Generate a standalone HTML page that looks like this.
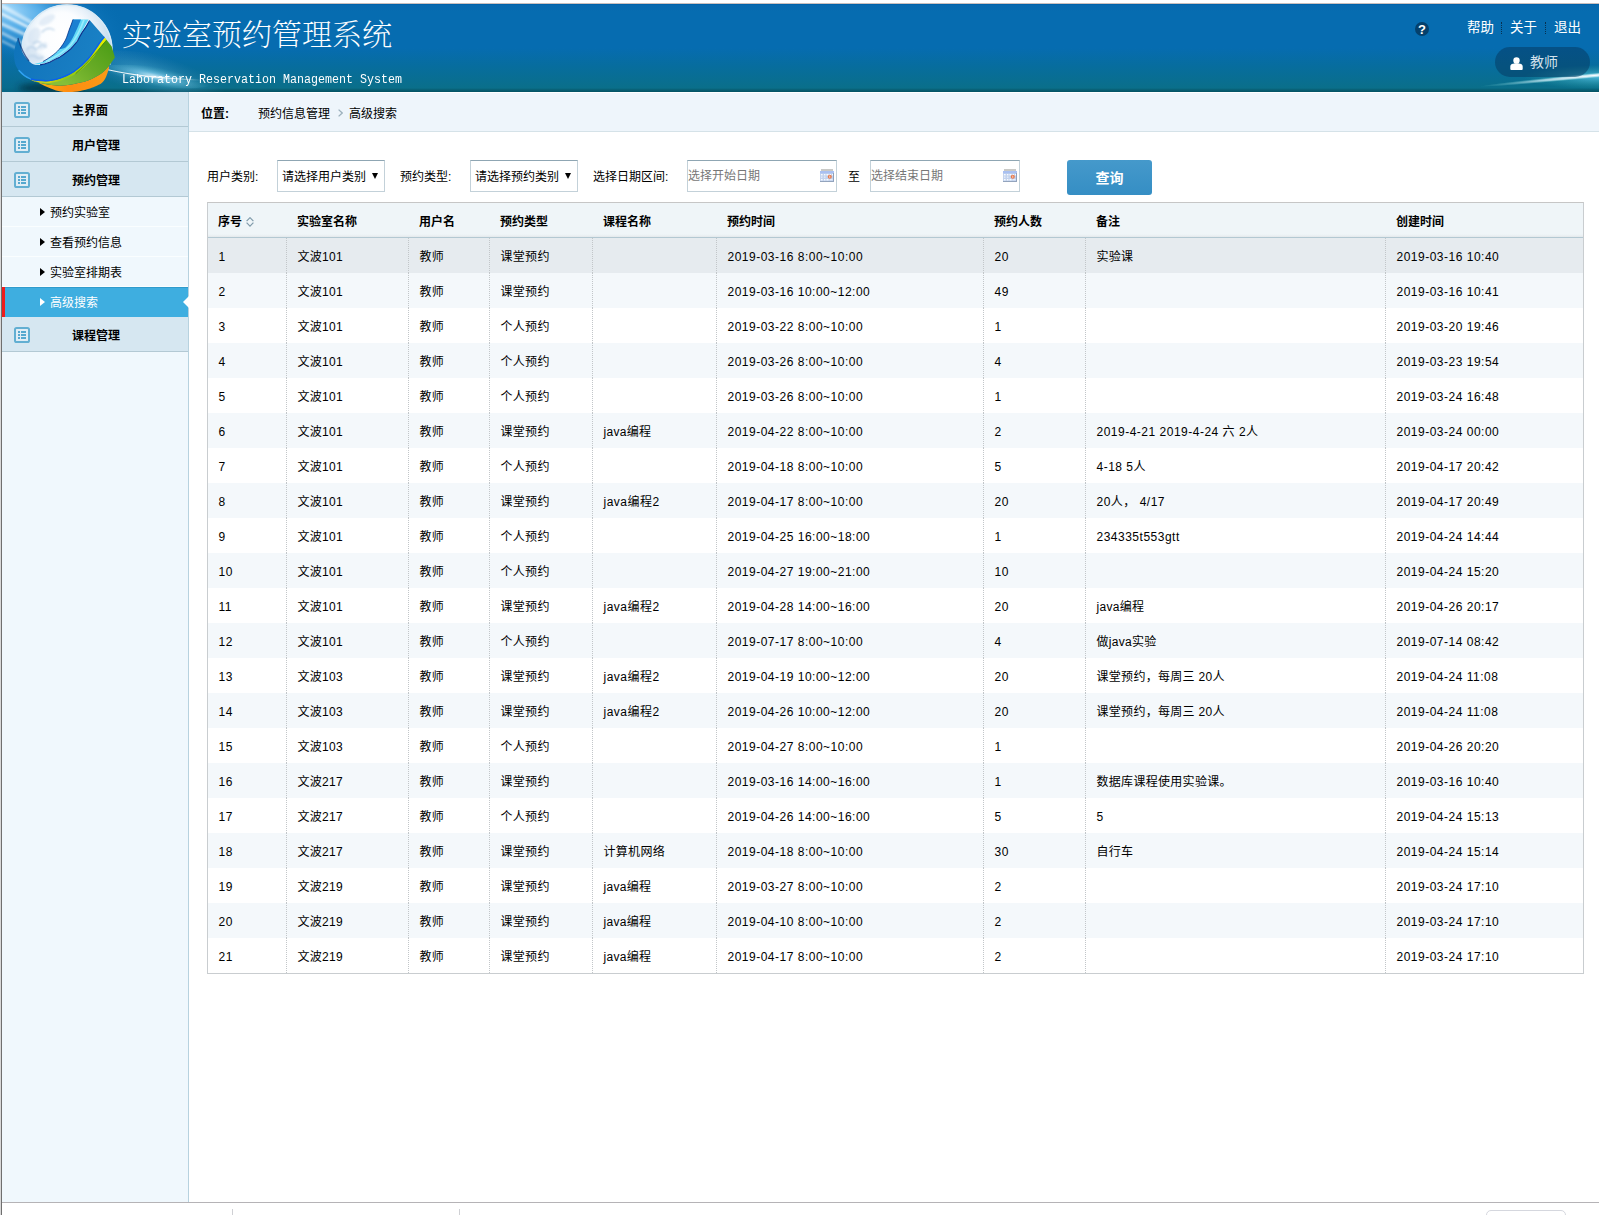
<!DOCTYPE html>
<html lang="zh-CN">
<head>
<meta charset="utf-8">
<title>实验室预约管理系统</title>
<style>
*{box-sizing:border-box;margin:0;padding:0}
html,body{width:1599px;height:1215px;overflow:hidden;background:#fff}
body{position:relative;font-family:"Liberation Sans","Noto Sans CJK SC",sans-serif;font-size:12px;color:#000}
.abs{position:absolute}
#edgeL0{left:0;top:0;width:1px;height:1215px;background:#d8d8d8}
#edgeL1{left:1px;top:0;width:1px;height:1215px;background:#6f6f6f}
#edgeT{left:2px;top:3px;width:1597px;height:1px;background:#c9bfbd}
/* header */
#hdr{left:2px;top:4px;width:1597px;height:88px;overflow:hidden;
 background:linear-gradient(to bottom,#0062aa 0,#0062aa 1px,#0869ae 1.2px,#066cb0 8px,#066cb0 44px,#076d9e 62px,#0a6f8a 84px,#075e72 86px,#045263 88px)}
#title{left:120px;top:11px;font-family:"Liberation Serif","Noto Serif CJK SC",serif;font-size:30px;line-height:40px;color:#fff;white-space:nowrap;letter-spacing:0;font-weight:200}
#sub{left:119.8px;top:67.4px;font-family:"Liberation Mono",monospace;font-size:12px;line-height:18px;color:#fff;white-space:nowrap;transform:scaleX(.972);transform-origin:0 0}
.tl{color:#fff;font-size:13.5px;line-height:18px;white-space:nowrap}
#user{left:1493px;top:43px;width:95px;height:30px;border-radius:15px;background:rgba(6,60,100,.55)}
#user span{position:absolute;left:35px;top:5px;font-size:14px;line-height:20px;color:#d3e2ec}
/* sidebar */
#side{left:2px;top:92px;width:187px;height:1110px;background:#f0f8fd;border-right:1px solid #b7d2df}
.m1{position:absolute;left:0;width:186px;height:35px;background:#d6e7f1;border-bottom:1px solid #b3c9d4;font-weight:bold;font-size:12px;line-height:38px;padding-left:70px}
.m1 svg{position:absolute;left:12px;top:10px}
.m2{position:absolute;left:0;width:186px;height:30px;line-height:33px;padding-left:48px;font-size:12px}
.m2:before{content:"";position:absolute;left:38px;top:11px;border-left:5px solid #000;border-top:4px solid transparent;border-bottom:4px solid transparent}
.m2{border-bottom:1px solid #fafeff}
.m2.on{background:#3eaee0;color:#fff;border-left:3px solid #ee1c1c;padding-left:45px;box-shadow:inset 0 1px 0 #2f9bcc;border-bottom:0;overflow:visible}
.m2.on:before{left:35px;border-left-color:#fff}
.m2.on:after{content:"";position:absolute;right:-1px;top:8.5px;border-right:6.5px solid #fff;border-top:6px solid transparent;border-bottom:6px solid transparent}
/* main */
#crumb{left:189px;top:93px;width:1410px;height:39px;background:#eef5fb;border-bottom:1px solid #d5e2e8;line-height:42px}
#crumb span{position:absolute;top:0;white-space:nowrap}
.lbl{position:absolute;top:160px;line-height:35px;white-space:nowrap}
.sel{position:absolute;top:160px;width:108px;height:32px;border:1px solid #c3d1d9;border-top-color:#8fa6b3;background:#fff;line-height:33px;padding-left:4px;white-space:nowrap}
.sel:after{content:"";position:absolute;right:6px;top:12px;border-top:6px solid #000;border-left:3.5px solid transparent;border-right:3.5px solid transparent}
.dt{position:absolute;top:160px;width:150px;height:32px;border:1px solid #c3d1d9;border-top-color:#8fa6b3;background:#fff;line-height:31px;padding-left:0;color:#777;white-space:nowrap}
.dt svg{position:absolute;left:132px;top:8px}
#btn{left:1067px;top:160px;width:85px;height:35px;border-radius:3px;background:linear-gradient(#4599cb,#358ec4);color:#fff;font-weight:bold;font-size:14px;line-height:37px;text-align:center}
/* table */
#tbl{left:207px;top:202px;width:1377px;border:1px solid #c9cdd0;border-top-color:#c6c6c6}
table{border-collapse:separate;border-spacing:0;table-layout:fixed;width:1375px;font-size:12px}
th{height:35px;background:linear-gradient(#eff5f8 0,#eff5f8 31px,#e9eef1 33px,#e2e7ea 34px);border-bottom:1px solid #b3c8d2;text-align:left;padding:0 0 0 10px;font-weight:bold;white-space:nowrap}
td{height:35px;vertical-align:top;line-height:30px;padding:3.5px 0 0 10.5px;border-right:1px dotted #c2c6c9;white-space:nowrap;letter-spacing:.3px;color:#000}
td:last-child{border-right:0}
td.n{letter-spacing:.5px}
tr.e td{background:#f4f8fb}
tr.h td{background:#e6ebef}
#foot{left:2px;top:1202px;width:1597px;height:1px;background:#b5b3b6}
.tick{position:absolute;top:1209px;width:1px;height:6px;background:#cfd0d4}
#fbox{left:1486px;top:1210px;width:80px;height:20px;border:1px solid #d5d7de;border-radius:5px}
</style>
</head>
<body>
<div class="abs" id="edgeL0"></div><div class="abs" id="edgeL1"></div><div class="abs" id="edgeT"></div>

<div class="abs" id="hdr">
<svg class="abs" style="left:0;top:0" width="1597" height="88" viewBox="2 4 1597 88">
<defs>
<radialGradient id="gl" cx="6" cy="8" r="130" gradientUnits="userSpaceOnUse" gradientTransform="translate(6 8) rotate(18) scale(1 .42) translate(-6 -8)"><stop offset="0" stop-color="#a6dafb" stop-opacity="1"/><stop offset=".3" stop-color="#5db4ee" stop-opacity=".9"/><stop offset=".65" stop-color="#2189d2" stop-opacity=".5"/><stop offset="1" stop-color="#0a6fb2" stop-opacity="0"/></radialGradient>
<linearGradient id="lt2" x1="0" y1="40" x2="0" y2="92" gradientUnits="userSpaceOnUse"><stop offset="0" stop-color="#0d74b2" stop-opacity="0"/><stop offset=".45" stop-color="#0b6fa6" stop-opacity=".55"/><stop offset="1" stop-color="#07698a" stop-opacity=".85"/></linearGradient>
<linearGradient id="lt" x1="0" y1="50" x2="0" y2="92" gradientUnits="userSpaceOnUse"><stop offset="0" stop-color="#07698a" stop-opacity="0"/><stop offset="1" stop-color="#07698a" stop-opacity=".9"/></linearGradient>
<radialGradient id="sp" cx="62" cy="36" r="52" gradientUnits="userSpaceOnUse"><stop offset="0" stop-color="#ffffff"/><stop offset=".45" stop-color="#fbfdff"/><stop offset=".75" stop-color="#dbe9f5"/><stop offset=".93" stop-color="#c3dcef"/><stop offset="1" stop-color="#a5d2f0"/></radialGradient>
<linearGradient id="gr" x1="108" y1="45" x2="70" y2="88" gradientUnits="userSpaceOnUse"><stop offset="0" stop-color="#4f9f18"/><stop offset=".5" stop-color="#68ab26"/><stop offset="1" stop-color="#86bf38"/></linearGradient>
<linearGradient id="ye" x1="104" y1="38" x2="40" y2="83" gradientUnits="userSpaceOnUse"><stop offset="0" stop-color="#e8f000"/><stop offset=".35" stop-color="#b0d400"/><stop offset=".7" stop-color="#8fc818"/><stop offset="1" stop-color="#f0d810"/></linearGradient>
<linearGradient id="or" x1="35" y1="80" x2="108" y2="80" gradientUnits="userSpaceOnUse"><stop offset="0" stop-color="#fbb414"/><stop offset=".45" stop-color="#ff8c10"/><stop offset="1" stop-color="#f99a18"/></linearGradient>
<linearGradient id="bb" x1="20" y1="40" x2="100" y2="70" gradientUnits="userSpaceOnUse"><stop offset="0" stop-color="#0f74bb"/><stop offset=".5" stop-color="#167ac0"/><stop offset="1" stop-color="#1a82c6"/></linearGradient>
<radialGradient id="st1" cx="155" cy="76.5" r="60" gradientUnits="userSpaceOnUse" gradientTransform="translate(155 76.5) rotate(6) scale(1 .16) translate(-155 -76.5)"><stop offset="0" stop-color="#e8f8ff" stop-opacity=".85"/><stop offset=".35" stop-color="#8fd8f5" stop-opacity=".5"/><stop offset="1" stop-color="#4ab" stop-opacity="0"/></radialGradient>
<linearGradient id="ln" x1="109" y1="0" x2="203" y2="0" gradientUnits="userSpaceOnUse"><stop offset="0" stop-color="#fff" stop-opacity=".9"/><stop offset=".6" stop-color="#fff" stop-opacity=".85"/><stop offset="1" stop-color="#fff" stop-opacity="0"/></linearGradient>
<radialGradient id="st2" cx="150" cy="74" r="80" gradientUnits="userSpaceOnUse" gradientTransform="translate(150 74) rotate(8) scale(1 .26) translate(-150 -74)"><stop offset="0" stop-color="#6cc4ea" stop-opacity=".5"/><stop offset="1" stop-color="#48b" stop-opacity="0"/></radialGradient>
<radialGradient id="st3" cx="1599" cy="75" r="120" gradientUnits="userSpaceOnUse" gradientTransform="translate(1599 75) scale(1 .022) translate(-1599 -75)"><stop offset="0" stop-color="#fff" stop-opacity="1"/><stop offset=".5" stop-color="#d5f2fb" stop-opacity=".7"/><stop offset="1" stop-color="#6cc" stop-opacity="0"/></radialGradient>
<radialGradient id="st4" cx="1599" cy="77" r="75" gradientUnits="userSpaceOnUse" gradientTransform="translate(1599 77) scale(1 .16) translate(-1599 -77)"><stop offset="0" stop-color="#5cc6ea" stop-opacity=".8"/><stop offset="1" stop-color="#3aa" stop-opacity="0"/></radialGradient>
<clipPath id="cs"><rect x="10" y="0" width="110" height="65"/></clipPath>
<filter id="bl" x="-20%" y="-20%" width="140%" height="140%"><feGaussianBlur stdDeviation="1.2"/></filter>
<filter id="bl2" x="-20%" y="-50%" width="140%" height="200%"><feGaussianBlur stdDeviation="3"/></filter>
</defs>
<rect x="2" y="4" width="190" height="88" fill="url(#gl)"/>
<rect x="2" y="40" width="60" height="52" fill="url(#lt2)"/>
<g stroke="#fff" stroke-linecap="round" fill="none" filter="url(#bl)">
<path d="M2 6 L34 24" stroke-opacity=".5" stroke-width="4"/>
<path d="M2 14 L30 28" stroke-opacity=".75" stroke-width="3"/>
<path d="M2 24 L26 35" stroke-opacity=".6" stroke-width="3.5"/>
<path d="M2 33 L22 43" stroke-opacity=".5" stroke-width="3"/>
<path d="M2 41 L18 49" stroke-opacity=".45" stroke-width="2"/>
</g>
<ellipse cx="52" cy="88" rx="34" ry="5" fill="#02303f" fill-opacity=".85" filter="url(#bl2)"/>
<ellipse cx="150" cy="74" rx="80" ry="21" fill="url(#st2)" transform="rotate(8 150 74)"/>
<ellipse cx="155" cy="76.5" rx="60" ry="10" fill="url(#st1)" transform="rotate(6 155 76.5)"/>
<path d="M108 69.8 Q140 77.6 203 80.3" fill="none" stroke="url(#ln)" stroke-width="1.1"/>
<g clip-path="url(#cs)"><circle cx="67" cy="50" r="45.5" fill="url(#sp)"/>
<circle cx="67" cy="50" r="45" fill="none" stroke="#d8eaf6" stroke-width="1.4" stroke-opacity=".95"/>
<g fill="#cfe0f0" fill-opacity=".55" filter="url(#bl)"><ellipse cx="31" cy="52" rx="6" ry="7"/><ellipse cx="37" cy="58" rx="7" ry="4"/><ellipse cx="34" cy="36" rx="6" ry="9" transform="rotate(25 34 36)"/><ellipse cx="47" cy="20" rx="9" ry="4" transform="rotate(-30 47 20)"/><ellipse cx="43" cy="46" rx="5" ry="3" transform="rotate(-35 43 46)"/></g>
<g stroke="#b4cee6" stroke-width="1.2" fill="none" stroke-linecap="round" filter="url(#bl)">
<path d="M27 50 q3-5 7-2 q2 3 5-1 q3-4 7 0"/><path d="M28 57 q4-3 8 0 q3 3 7 0"/><path d="M33 44 q4-4 8-1"/><path d="M42 32 q6-6 12-2"/>
</g></g>
<path d="M30 79 C30.7 79.4 31.5 80.5 34.0 81.3 C36.5 82.1 41.2 83.3 45.0 84.0 C48.8 84.7 53.5 85.4 57.0 85.6 C60.5 85.8 63.2 85.6 66.0 85.3 C68.8 85.0 70.3 84.8 74.0 84.0 C77.7 83.2 83.3 82.4 88.0 80.6 C92.7 78.8 98.5 75.4 102.0 73.0 C105.5 70.6 107.8 67.2 109.0 66.0 L109 68 C108.5 69.5 107.2 74.5 106.0 77.0 C104.8 79.5 103.8 81.1 102.0 82.7 C100.2 84.3 97.3 85.5 95.0 86.5 C92.7 87.5 90.9 88.2 88.0 89.0 C85.1 89.8 81.2 91.0 77.5 91.5 C73.8 92.0 69.6 92.2 66.0 92.0 C62.4 91.8 59.3 91.3 56.0 90.4 C52.7 89.5 49.0 87.8 46.0 86.5 C43.0 85.2 40.7 83.8 38.0 82.5 C35.3 81.2 31.3 79.6 30.0 79.0Z" fill="url(#or)"/>
<path d="M104.4 37.5 L107.5 41 L111.7 46.4 L114.9 57.5 L109 66 C107.8 67.2 105.5 70.6 102.0 73.0 C98.5 75.4 92.7 78.8 88.0 80.6 C83.3 82.4 77.7 83.2 74.0 84.0 C70.3 84.8 68.8 85.0 66.0 85.3 C63.2 85.6 60.5 85.8 57.0 85.6 C53.5 85.4 48.8 84.7 45.0 84.0 C41.2 83.3 35.8 81.8 34.0 81.3 L31 79.6 C32.2 79.8 35.0 80.7 38.0 81.0 C41.0 81.3 45.3 81.6 49.0 81.2 C52.7 80.8 55.8 80.3 60.0 78.8 C64.2 77.3 69.3 75.3 74.0 72.1 C78.7 68.9 83.8 64.3 88.0 59.6 C92.2 54.9 96.5 47.7 99.2 44.0 C101.9 40.3 103.5 38.6 104.4 37.5Z" fill="url(#gr)"/>
<path d="M104.4 37.5 C103.5 38.6 101.9 40.3 99.2 44.0 C96.5 47.7 92.2 54.9 88.0 59.6 C83.8 64.3 78.7 68.9 74.0 72.1 C69.3 75.3 64.2 77.3 60.0 78.8 C55.8 80.3 52.7 80.8 49.0 81.2 C45.3 81.6 41.0 81.3 38.0 81.0 C35.0 80.7 32.2 79.8 31.0 79.6 L40 82.6 C41.6 82.6 46.0 83.2 49.5 82.9 C53.0 82.6 56.6 82.1 61.0 80.6 C65.3 79.1 70.8 76.9 75.6 73.7 C80.4 70.5 85.6 65.9 89.8 61.4 C94.0 56.9 98.2 50.1 101.0 46.5 C103.8 42.9 105.7 41.1 106.6 40.0Z" fill="url(#ye)"/>
<path d="M106.6 40 C101 46.5 89.8 61.4 75.6 73.7" fill="none" stroke="#2c7f10" stroke-width="1" stroke-opacity=".7"/>
<path d="M90 20.5 L104.4 36.9 C103.5 38.0 101.9 39.8 99.2 43.5 C96.5 47.2 92.2 54.3 88.0 59.0 C83.8 63.7 78.7 68.3 74.0 71.5 C69.3 74.7 64.2 76.7 60.0 78.2 C55.8 79.7 52.7 80.2 49.0 80.6 C45.3 80.9 41.2 80.6 38.0 80.3 C34.8 80.0 32.5 79.8 30.0 78.9 C27.5 78.0 25.3 77.2 23.0 75.0 C20.7 72.8 17.5 69.4 16.0 66.0 C14.5 62.6 14.1 58.3 14.0 54.8 C13.9 51.3 14.8 47.8 15.5 45.0 C16.2 42.2 17.6 39.2 18.0 38.0 C18.4 39.5 19.5 44.2 20.5 47.0 C21.5 49.8 22.6 52.7 24.0 55.0 C25.4 57.3 27.3 59.4 29.0 61.0 C30.7 62.6 32.2 63.9 34.0 64.6 C35.8 65.2 37.4 65.3 40.0 64.9 C42.6 64.5 46.3 63.5 49.6 62.2 C52.9 60.9 56.5 59.1 60.0 56.9 C63.5 54.7 67.7 51.6 70.6 49.0 C73.5 46.4 75.6 43.7 77.5 41.0 C79.4 38.3 79.9 36.0 82.0 32.6 C84.1 29.2 88.7 22.5 90.0 20.5Z" fill="url(#bb)"/>
<path d="M104.4 36.9 C103.5 38.0 101.9 39.8 99.2 43.5 C96.5 47.2 92.2 54.3 88.0 59.0 C83.8 63.7 78.7 68.3 74.0 71.5 C69.3 74.7 64.2 76.7 60.0 78.2 C55.8 79.7 52.7 80.2 49.0 80.6 C45.3 80.9 41.2 80.6 38.0 80.3 C34.8 80.0 31.3 79.1 30.0 78.9" fill="none" stroke="#0a5ff0" stroke-width="1.4"/>
<path d="M19 70.5 Q23.5 76 30.5 79" fill="none" stroke="#2fa2f2" stroke-width="1.3" stroke-linecap="round"/>
<path d="M73 19.5 L88.6 19.5 C87.5 21.5 83.8 28.2 82.0 31.6 C80.2 35.0 79.4 37.3 77.5 40.0 C75.6 42.7 73.5 45.4 70.6 48.0 C67.7 50.6 63.5 53.7 60.0 55.9 C56.5 58.1 52.9 59.9 49.6 61.2 C46.3 62.6 42.4 63.5 40.0 64.0 C37.6 64.5 35.8 64.2 35.0 64.3 L34.5 64 C35.9 63.6 40.2 62.8 43.0 61.5 C45.8 60.2 48.2 58.6 51.0 56.5 C53.8 54.4 57.1 51.8 59.5 49.0 C61.9 46.2 63.8 43.3 65.5 40.0 C67.2 36.7 68.2 32.4 69.5 29.0 C70.8 25.6 72.4 21.0 73.0 19.4Z" fill="#62d8f6"/>
<path d="M73 19.5 L81 19.5 C80.2 21.2 78.1 26.6 76.5 30.0 C74.9 33.4 73.3 37.1 71.5 40.0 C69.7 42.9 67.5 46.0 65.5 47.5 C63.5 49.0 60.5 48.8 59.5 49.0 C60.5 47.5 63.8 43.3 65.5 40.0 C67.2 36.7 68.2 32.4 69.5 29.0 C70.8 25.6 72.4 21.0 73.0 19.4Z" fill="#1b80d2"/>
<path d="M89.6 20.6 C87 26 84 30 82 32.6 C80 36 78.5 39 77.5 41 C75 44 73 46.5 70.6 49 C67 52 64 54.5 60 56.9 C56 59 53 60.8 49.6 62.2 C46 63.6 43 64.5 40 64.9" fill="none" stroke="#0b2f8a" stroke-width="1.1"/>
<path d="M84 19.8 C81 28 77 37 71 44.5 C65 51 57 56.5 46 61.5" fill="none" stroke="#a9f2fd" stroke-width="1.8" stroke-opacity=".75"/>
<path d="M73 19.4 C71.5 24 70.5 26.5 69.5 29 C68 33 67 37 65.5 40 C63.5 43.5 62 46 59.5 49 C57 52 54 54.5 51 56.5 C48 58.5 46 60 43 61.5" fill="none" stroke="#0a2a80" stroke-width="1" stroke-opacity=".75"/>
<path d="M18 38 C20.5 47 24 55 29 61" fill="none" stroke="#062a70" stroke-width="1.2" stroke-opacity=".7"/>
<ellipse cx="1599" cy="77" rx="75" ry="12" fill="url(#st4)"/>
<ellipse cx="1599" cy="75" rx="120" ry="3.2" fill="url(#st3)" transform="rotate(-5.5 1599 75)"/>
</svg>
  <div class="abs" id="title">实验室预约管理系统</div>
  <div class="abs" id="sub">Laboratory Reservation Management System</div>
  <div class="abs tl" style="left:1465px;top:15px">帮助</div>
  <div class="abs tl" style="left:1508px;top:15px">关于</div>
  <div class="abs tl" style="left:1552px;top:15px">退出</div>
  <div class="abs" style="left:1413px;top:18px;width:14px;height:14px;border-radius:7px;background:#04406c;color:#fff;font-weight:bold;font-size:13px;line-height:15.5px;text-align:center">?</div>
  <div class="abs" style="left:1499px;top:18px;width:0;height:12px;border-left:1px dotted #07304f"></div>
  <div class="abs" style="left:1543px;top:18px;width:0;height:12px;border-left:1px dotted #07304f"></div>
  <div class="abs" id="user"><svg class="abs" style="left:15px;top:10px" width="13" height="13" viewBox="0 0 13 13"><circle cx="6.5" cy="3.5" r="3.2" fill="#fff"/><path d="M.3 12V9.6Q.3 7 3 6.7L5 6.2H8L10 6.7Q12.7 7 12.7 9.6V12Q12.7 13 11.7 13H1.3Q.3 13 .3 12Z" fill="#fff"/></svg><span>教师</span></div>
</div>

<div class="abs" id="side">
  <div class="m1" style="top:0"><svg width="16" height="16" viewBox="0 0 16 16"><rect x="1" y="1" width="14" height="14" rx="1.6" fill="#e0edf5" stroke="#62afd2" stroke-width="2"/><g fill="#55a8cf"><rect x="4" y="4" width="2" height="2"/><rect x="4" y="7" width="2" height="2"/><rect x="4" y="10" width="2" height="2"/><rect x="7" y="4" width="5" height="2"/><rect x="7" y="7" width="5" height="2"/><rect x="7" y="10" width="5" height="2"/></g></svg>主界面</div>
  <div class="m1" style="top:35px"><svg width="16" height="16" viewBox="0 0 16 16"><rect x="1" y="1" width="14" height="14" rx="1.6" fill="#e0edf5" stroke="#62afd2" stroke-width="2"/><g fill="#55a8cf"><rect x="4" y="4" width="2" height="2"/><rect x="4" y="7" width="2" height="2"/><rect x="4" y="10" width="2" height="2"/><rect x="7" y="4" width="5" height="2"/><rect x="7" y="7" width="5" height="2"/><rect x="7" y="10" width="5" height="2"/></g></svg>用户管理</div>
  <div class="m1" style="top:70px"><svg width="16" height="16" viewBox="0 0 16 16"><rect x="1" y="1" width="14" height="14" rx="1.6" fill="#e0edf5" stroke="#62afd2" stroke-width="2"/><g fill="#55a8cf"><rect x="4" y="4" width="2" height="2"/><rect x="4" y="7" width="2" height="2"/><rect x="4" y="10" width="2" height="2"/><rect x="7" y="4" width="5" height="2"/><rect x="7" y="7" width="5" height="2"/><rect x="7" y="10" width="5" height="2"/></g></svg>预约管理</div>
  <div class="m2" style="top:105px">预约实验室</div>
  <div class="m2" style="top:135px">查看预约信息</div>
  <div class="m2" style="top:165px">实验室排期表</div>
  <div class="m2 on" style="top:195px">高级搜索</div>
  <div class="m1" style="top:225px"><svg width="16" height="16" viewBox="0 0 16 16"><rect x="1" y="1" width="14" height="14" rx="1.6" fill="#e0edf5" stroke="#62afd2" stroke-width="2"/><g fill="#55a8cf"><rect x="4" y="4" width="2" height="2"/><rect x="4" y="7" width="2" height="2"/><rect x="4" y="10" width="2" height="2"/><rect x="7" y="4" width="5" height="2"/><rect x="7" y="7" width="5" height="2"/><rect x="7" y="10" width="5" height="2"/></g></svg>课程管理</div>
</div>

<div class="abs" id="crumb">
  <span style="left:12px;font-weight:bold">位置:</span>
  <span style="left:69px">预约信息管理</span>
  <svg class="abs" style="left:148.5px;top:15.5px" width="5" height="8" viewBox="0 0 5 8"><path d="M.6 .6L4.2 4L.6 7.4" fill="none" stroke="#9bb0bc" stroke-width="1.3"/></svg>
  <span style="left:160px">高级搜索</span>
</div>

<div class="lbl" style="left:207px">用户类别:</div>
<div class="sel" style="left:277px">请选择用户类别</div>
<div class="lbl" style="left:400px">预约类型:</div>
<div class="sel" style="left:470px">请选择预约类别</div>
<div class="lbl" style="left:593px">选择日期区间:</div>
<div class="dt" style="left:687px">选择开始日期<svg width="14" height="13" viewBox="0 0 14 13"><rect x="1" y="0" width="12" height="2" fill="#c9c9c6"/><rect x="0" y="2" width="14" height="11" fill="#c3d3ee"/><rect x="0" y="2" width="14" height="2.4" fill="#a9c0f1"/><g fill="#fff" fill-opacity=".9"><rect x="1" y="5" width="1.6" height="1.4"/><rect x="4" y="5" width="1.4" height="1.4"/><rect x="6.5" y="5" width="2" height="1.4"/><rect x="9.6" y="5" width="1.4" height="1.4"/><rect x="12" y="5" width="1" height="1.4"/><rect x="1" y="10" width="1.6" height="1.4"/><rect x="4" y="10" width="1.4" height="1.4"/><rect x="6.5" y="10" width="2" height="1.4"/><rect x="9.6" y="10" width="3" height="1.2" fill-opacity=".6"/><rect x="1" y="7.4" width="1.4" height="1.6" fill-opacity=".5"/><rect x="4" y="7.4" width="1.4" height="1.6" fill-opacity=".5"/></g><circle cx="9.8" cy="7.8" r="2" fill="#e8784a"/><rect x="9.4" y="6.6" width=".8" height="2.2" fill="#fff" fill-opacity=".8"/><rect x="13" y="4" width="1" height="9" fill="#8fa0ba"/><rect x="0" y="12" width="14" height="1" fill="#93a4bd"/></svg></div>
<div class="lbl" style="left:848px">至</div>
<div class="dt" style="left:870px">选择结束日期<svg width="14" height="13" viewBox="0 0 14 13"><rect x="1" y="0" width="12" height="2" fill="#c9c9c6"/><rect x="0" y="2" width="14" height="11" fill="#c3d3ee"/><rect x="0" y="2" width="14" height="2.4" fill="#a9c0f1"/><g fill="#fff" fill-opacity=".9"><rect x="1" y="5" width="1.6" height="1.4"/><rect x="4" y="5" width="1.4" height="1.4"/><rect x="6.5" y="5" width="2" height="1.4"/><rect x="9.6" y="5" width="1.4" height="1.4"/><rect x="12" y="5" width="1" height="1.4"/><rect x="1" y="10" width="1.6" height="1.4"/><rect x="4" y="10" width="1.4" height="1.4"/><rect x="6.5" y="10" width="2" height="1.4"/><rect x="9.6" y="10" width="3" height="1.2" fill-opacity=".6"/><rect x="1" y="7.4" width="1.4" height="1.6" fill-opacity=".5"/><rect x="4" y="7.4" width="1.4" height="1.6" fill-opacity=".5"/></g><circle cx="9.8" cy="7.8" r="2" fill="#e8784a"/><rect x="9.4" y="6.6" width=".8" height="2.2" fill="#fff" fill-opacity=".8"/><rect x="13" y="4" width="1" height="9" fill="#8fa0ba"/><rect x="0" y="12" width="14" height="1" fill="#93a4bd"/></svg></div>
<div class="abs" id="btn">查询</div>

<div class="abs" id="tbl">
<table>
<colgroup><col style="width:79px"><col style="width:122px"><col style="width:81px"><col style="width:103px"><col style="width:124px"><col style="width:267px"><col style="width:102px"><col style="width:300px"><col style="width:197px"></colgroup>
<thead><tr><th>序号<svg style="margin-left:4px;vertical-align:-1px" width="8" height="10" viewBox="0 0 8 10"><path d="M.6 4.1L4 .7L7.4 4.1M.6 5.7L4 9.1L7.4 5.7" fill="none" stroke="#7f9aaa" stroke-width="1.2"/></svg></th><th>实验室名称</th><th>用户名</th><th>预约类型</th><th>课程名称</th><th>预约时间</th><th>预约人数</th><th>备注</th><th>创建时间</th></tr></thead>
<tbody id="tb">
<tr class="h"><td class="n">1</td><td>文波101</td><td>教师</td><td>课堂预约</td><td></td><td class="n">2019-03-16 8:00~10:00</td><td class="n">20</td><td>实验课</td><td class="n">2019-03-16 10:40</td></tr>
<tr class="e"><td class="n">2</td><td>文波101</td><td>教师</td><td>课堂预约</td><td></td><td class="n">2019-03-16 10:00~12:00</td><td class="n">49</td><td></td><td class="n">2019-03-16 10:41</td></tr>
<tr><td class="n">3</td><td>文波101</td><td>教师</td><td>个人预约</td><td></td><td class="n">2019-03-22 8:00~10:00</td><td class="n">1</td><td></td><td class="n">2019-03-20 19:46</td></tr>
<tr class="e"><td class="n">4</td><td>文波101</td><td>教师</td><td>个人预约</td><td></td><td class="n">2019-03-26 8:00~10:00</td><td class="n">4</td><td></td><td class="n">2019-03-23 19:54</td></tr>
<tr><td class="n">5</td><td>文波101</td><td>教师</td><td>个人预约</td><td></td><td class="n">2019-03-26 8:00~10:00</td><td class="n">1</td><td></td><td class="n">2019-03-24 16:48</td></tr>
<tr class="e"><td class="n">6</td><td>文波101</td><td>教师</td><td>课堂预约</td><td>java编程</td><td class="n">2019-04-22 8:00~10:00</td><td class="n">2</td><td class="n">2019-4-21 2019-4-24 六 2人</td><td class="n">2019-03-24 00:00</td></tr>
<tr><td class="n">7</td><td>文波101</td><td>教师</td><td>个人预约</td><td></td><td class="n">2019-04-18 8:00~10:00</td><td class="n">5</td><td class="n">4-18 5人</td><td class="n">2019-04-17 20:42</td></tr>
<tr class="e"><td class="n">8</td><td>文波101</td><td>教师</td><td>课堂预约</td><td class="n">java编程2</td><td class="n">2019-04-17 8:00~10:00</td><td class="n">20</td><td class="n">20人， 4/17</td><td class="n">2019-04-17 20:49</td></tr>
<tr><td class="n">9</td><td>文波101</td><td>教师</td><td>个人预约</td><td></td><td class="n">2019-04-25 16:00~18:00</td><td class="n">1</td><td class="n">234335t553gtt</td><td class="n">2019-04-24 14:44</td></tr>
<tr class="e"><td class="n">10</td><td>文波101</td><td>教师</td><td>个人预约</td><td></td><td class="n">2019-04-27 19:00~21:00</td><td class="n">10</td><td></td><td class="n">2019-04-24 15:20</td></tr>
<tr><td class="n">11</td><td>文波101</td><td>教师</td><td>课堂预约</td><td class="n">java编程2</td><td class="n">2019-04-28 14:00~16:00</td><td class="n">20</td><td>java编程</td><td class="n">2019-04-26 20:17</td></tr>
<tr class="e"><td class="n">12</td><td>文波101</td><td>教师</td><td>个人预约</td><td></td><td class="n">2019-07-17 8:00~10:00</td><td class="n">4</td><td>做java实验</td><td class="n">2019-07-14 08:42</td></tr>
<tr><td class="n">13</td><td>文波103</td><td>教师</td><td>课堂预约</td><td class="n">java编程2</td><td class="n">2019-04-19 10:00~12:00</td><td class="n">20</td><td>课堂预约，每周三 20人</td><td class="n">2019-04-24 11:08</td></tr>
<tr class="e"><td class="n">14</td><td>文波103</td><td>教师</td><td>课堂预约</td><td class="n">java编程2</td><td class="n">2019-04-26 10:00~12:00</td><td class="n">20</td><td>课堂预约，每周三 20人</td><td class="n">2019-04-24 11:08</td></tr>
<tr><td class="n">15</td><td>文波103</td><td>教师</td><td>个人预约</td><td></td><td class="n">2019-04-27 8:00~10:00</td><td class="n">1</td><td></td><td class="n">2019-04-26 20:20</td></tr>
<tr class="e"><td class="n">16</td><td>文波217</td><td>教师</td><td>课堂预约</td><td></td><td class="n">2019-03-16 14:00~16:00</td><td class="n">1</td><td>数据库课程使用实验课。</td><td class="n">2019-03-16 10:40</td></tr>
<tr><td class="n">17</td><td>文波217</td><td>教师</td><td>个人预约</td><td></td><td class="n">2019-04-26 14:00~16:00</td><td class="n">5</td><td class="n">5</td><td class="n">2019-04-24 15:13</td></tr>
<tr class="e"><td class="n">18</td><td>文波217</td><td>教师</td><td>课堂预约</td><td>计算机网络</td><td class="n">2019-04-18 8:00~10:00</td><td class="n">30</td><td>自行车</td><td class="n">2019-04-24 15:14</td></tr>
<tr><td class="n">19</td><td>文波219</td><td>教师</td><td>课堂预约</td><td>java编程</td><td class="n">2019-03-27 8:00~10:00</td><td class="n">2</td><td></td><td class="n">2019-03-24 17:10</td></tr>
<tr class="e"><td class="n">20</td><td>文波219</td><td>教师</td><td>课堂预约</td><td>java编程</td><td class="n">2019-04-10 8:00~10:00</td><td class="n">2</td><td></td><td class="n">2019-03-24 17:10</td></tr>
<tr><td class="n">21</td><td>文波219</td><td>教师</td><td>课堂预约</td><td>java编程</td><td class="n">2019-04-17 8:00~10:00</td><td class="n">2</td><td></td><td class="n">2019-03-24 17:10</td></tr>
</tbody>
</table>
</div>

<div class="abs" id="foot"></div>
<div class="tick" style="left:232px"></div><div class="tick" style="left:459px"></div>
<div class="abs" id="fbox"></div>
</body>
</html>
